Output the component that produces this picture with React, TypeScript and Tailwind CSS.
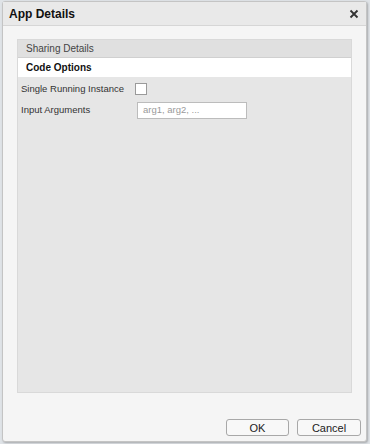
import React from 'react';

export default function App() {
  return (
    <div className="w-[370px] h-[444px] bg-[#dfe3e7] pt-[1px] pl-[2px] pr-[3px] pb-[2px] font-['Liberation_Sans',Arial,sans-serif] text-[9.5px] text-[#222]">
      <div className="flex h-full flex-col rounded-[3px] border border-[#c4c4c4] bg-[#f5f5f5] shadow-[1px_1px_2px_rgba(0,0,0,0.25)]">
        <div className="flex h-[24px] shrink-0 items-center justify-between border-b border-[#d6d6d6] bg-[#e9e9e9] pl-[6px] pr-[6px]">
          <span className="font-bold text-[12px] text-[#111]">App Details</span>
          <svg width="10" height="10" viewBox="0 0 10 10" className="mr-[1px]">
            <path d="M1.5 1.5 L8.5 8.5 M8.5 1.5 L1.5 8.5" stroke="#333" strokeWidth="1.8" />
          </svg>
        </div>
        <div className="flex flex-1 flex-col px-[14px] pt-[13px]">
          <div className="flex h-[354px] flex-col border border-[#d9d9d9] bg-[#e6e6e6]">
            <div className="flex h-[18px] items-center border-b border-[#d0d0d0] bg-[#e0e0e0] pl-[8px] text-[10px] text-[#444]">
              Sharing Details
            </div>
            <div className="flex h-[19px] items-center bg-white pl-[8px] text-[10px] font-bold text-[#111]">
              Code Options
            </div>
            <div className="flex flex-col gap-[5px] pl-[3px] pt-[4px]">
              <div className="flex h-[16px] items-center whitespace-nowrap">
                <span className="w-[114px] text-[#333]">Single Running Instance</span>
                <div className="h-[12px] w-[12px] border border-[#9a9a9a] bg-white" />
              </div>
              <div className="flex h-[16px] items-center whitespace-nowrap">
                <span className="w-[116px] text-[#333]">Input Arguments</span>
                <div className="flex h-[17px] w-[110px] items-center border border-[#bcbcbc] bg-white pl-[5px] text-[9.5px] text-[#9a9a9a]">
                  arg1, arg2, ...
                </div>
              </div>
            </div>
          </div>
          <div className="mt-auto mb-[5px] -mr-[9px] flex justify-end gap-[8px]">
            <button className="h-[17px] w-[63px] rounded-[3px] border border-[#a8a8a8] bg-[#f8f8f8] text-[11px] text-[#222]">OK</button>
            <button className="h-[17px] w-[64px] rounded-[3px] border border-[#a8a8a8] bg-[#f8f8f8] text-[11px] text-[#222]">Cancel</button>
          </div>
        </div>
      </div>
    </div>
  );
}
